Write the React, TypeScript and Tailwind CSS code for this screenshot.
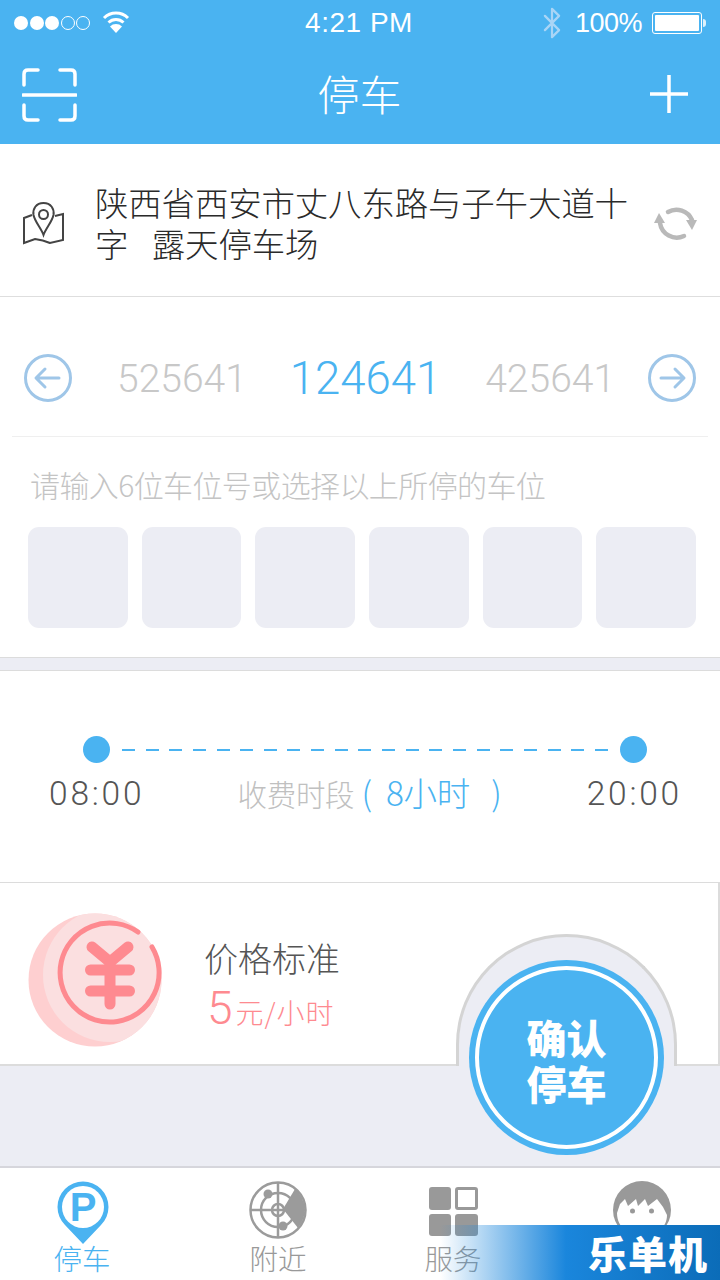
import React from 'react';
import { Bluetooth } from 'lucide-react';

const cjk = { fontFamily: '"Noto Sans CJK SC", sans-serif' };

function StatusBar() {
  return (
    <div className="h-[46px] flex items-center justify-between pl-[14px] pr-[14px] text-white font-['Liberation_Sans']">
      <div className="flex items-center w-[240px]">
        <div className="flex items-center gap-[1.500px]">
          {[0, 1, 2].map(i => <span key={i} className="w-[14px] h-[14px] rounded-full bg-white" />)}
          {[0, 1].map(i => <span key={i} className="w-[14px] h-[14px] rounded-full border border-white" />)}
        </div>
        <svg width="28" height="24" viewBox="0 0 28 24" className="ml-[12px] -mt-[3px]" fill="none" stroke="white" strokeWidth="3">
          <path d="M2 8 A17 17 0 0 1 26 8" />
          <path d="M6.5 12.5 A11 11 0 0 1 21.500 12.500" />
          <path d="M14 23 L8 16.500 A8.500 8.500 0 0 1 20 16.500 Z" fill="white" stroke="none" />
        </svg>
      </div>
      <div className="text-[28px] leading-none tracking-[0.5px] -ml-[2px]">4:21 PM</div>
      <div className="flex items-center justify-end w-[240px]">
        <Bluetooth size={34} strokeWidth={1.6} className="text-[#a9d5f6] mr-[6px]" />
        <span className="text-[27px] leading-none tracking-[-0.5px] mr-[10px]">100%</span>
        <div className="w-[50px] h-[22px] rounded-[3px] border border-white p-[2px]">
          <div className="w-full h-full bg-white rounded-[1px]" />
        </div>
        <div className="w-[3px] h-[8px] bg-white/80 rounded-r-sm ml-[1px]" />
      </div>
    </div>
  );
}

function NavBar() {
  return (
    <div className="h-[98px] flex items-center justify-between pl-[22px] pr-[32px]">
      <svg width="55" height="54" viewBox="0 0 55 54" fill="none" stroke="white" strokeWidth="3.500" strokeLinecap="round" strokeLinejoin="round">
        <path d="M2 17 V6 Q2 2 6 2 H16" />
        <path d="M38 2 H49 Q53 2 53 6 V17" />
        <path d="M2 37 V48 Q2 52 6 52 H16" />
        <path d="M38 52 H49 Q53 52 53 48 V37" />
        <path d="M1 27 H54" />
      </svg>
      <div className="text-[42px] leading-none text-white font-light -ml-[8px] -mt-[5px]" style={cjk}>停车</div>
      <svg width="38" height="38" viewBox="0 0 38 38" stroke="white" strokeWidth="3.500" className="-mt-[2px]">
        <path d="M0 19 H38 M19 0 V38" />
      </svg>
    </div>
  );
}

function AddressRow() {
  return (
    <div className="h-[153px] bg-white border-b border-[#dedede] flex items-center pl-[23px] pr-[22px] pt-[4px]">
      <svg width="41" height="46" viewBox="0 0 41 46" fill="none" stroke="#444" strokeWidth="2" className="shrink-0 mt-[2px]">
        <path d="M20.5 3 C13 3 9.500 9 10.500 15 C12 22 18 28 20.500 35 C23 28 29 22 30.500 15 C31.500 9 28 3 20.500 3 Z" />
        <circle cx="20.500" cy="14.500" r="4.500" />
        <path d="M9 15 L1 18 V43 L12 39 Q20 40 27 43 L40 40 V14 L32 16" />
      </svg>
      <div className="ml-[31px] w-[536px] text-[33.500px] leading-[41px] text-[#2a2a2a] tracking-[-0.200px] font-light" style={cjk}>
        陕西省西安市丈八东路与子午大道十字&nbsp;&nbsp;&nbsp;&#8202;露天停车场
      </div>
      <svg width="46" height="46" viewBox="0 0 46 46" fill="none" stroke="#b9b9b9" strokeWidth="4.500" strokeLinecap="round" className="ml-auto -mr-[1px] shrink-0">
        <path d="M15 13 A17 17 0 0 1 39 21" />
        <path d="M31 37 A17 17 0 0 1 7 24" />
        <path d="M33 21 L44 21 L39 31 Z" fill="#b9b9b9" stroke="none" />
        <path d="M1 24 L12 24 L6 14 Z" fill="#b9b9b9" stroke="none" />
      </svg>
    </div>
  );
}

function ArrowCircle({ dir }: { dir: 'left' | 'right' }) {
  return (
    <svg width="48" height="48" viewBox="0 0 48 48" fill="none" stroke="#9fc6e8" strokeWidth="3" strokeLinecap="round" strokeLinejoin="round" className="shrink-0">
      <circle cx="24" cy="24" r="22.500" />
      {dir === 'left'
        ? <path d="M35 24 H13 M21 15 L12 24 L21 33" />
        : <path d="M13 24 H35 M27 15 L36 24 L27 33" />}
    </svg>
  );
}

function SpotPicker() {
  return (
    <div className="h-[361px] bg-white border-b border-[#dcdcdc] flex flex-col">
      <div className="mx-[12px] h-[140px] border-b border-[#efefef] flex items-center px-[12px] pt-[22px] font-['Roboto']">
        <ArrowCircle dir="left" />
        <span className="ml-[45px] mt-[3px] text-[39px] leading-none text-[#c8c8c8] font-light">525641</span>
        <span className="ml-[43px] mt-[3px] text-[45.500px] leading-none text-[#4ab3f1] font-light">124641</span>
        <span className="ml-[44px] mt-[3px] text-[39px] leading-none text-[#c8c8c8] font-light">425641</span>
        <div className="ml-auto">
          <ArrowCircle dir="right" />
        </div>
      </div>
      <div className="pl-[30px] pt-[27px] text-[30px] leading-[40px] text-[#c4c4c4] tracking-[-0.600px] font-light" style={cjk}>
        请输入6位车位号或选择以上所停的车位
      </div>
      <div className="mt-[23px] mx-[28px] mr-[24px] grid grid-cols-6 gap-[14px]">
        {[0, 1, 2, 3, 4, 5].map(i => (
          <div key={i} className="h-[101px] rounded-[11px] bg-[#ecedf4]" />
        ))}
      </div>
    </div>
  );
}

function TimeRange() {
  return (
    <div className="h-[213px] bg-white border-t border-b border-[#dcdcdc] pt-[65px]">
      <div className="flex items-center pl-[83px] pr-[73px]">
        <span className="w-[27px] h-[27px] rounded-full bg-[#4ab3f1] shrink-0" />
        <div className="flex-1 flex justify-between px-[12px]">
          {Array.from({ length: 21 }).map((_, i) => (
            <span key={i} className="w-[13px] h-[2px] bg-[#4ab3f1]" />
          ))}
        </div>
        <span className="w-[27px] h-[27px] rounded-full bg-[#4ab3f1] shrink-0" />
      </div>
      <div className="mt-[9px] flex items-center justify-between pl-[49px] pr-[38px]">
        <span className="text-[33.500px] leading-[44px] text-[#555] font-['Roboto'] font-light tracking-[2.800px]">08:00</span>
        <span className="text-[29.500px] leading-[44px] text-[#c0c0c0] tracking-[-0.300px] font-light whitespace-pre -mt-[3px] ml-[8px]" style={cjk}>
          收费时段
          <span className="text-[#4ab3f1] text-[33.500px]"> (  8小时   )</span>
        </span>
        <span className="text-[33.500px] leading-[44px] text-[#555] font-['Roboto'] font-light tracking-[2.800px]">20:00</span>
      </div>
    </div>
  );
}

function CoinIcon() {
  return (
    <svg width="135" height="134" viewBox="0 0 135 134" fill="none">
      <clipPath id="coinClip">
        <circle cx="67" cy="67" r="66.500" />
      </clipPath>
      <circle cx="67" cy="67" r="66.500" fill="#fecfd0" />
      <circle cx="82" cy="62" r="67" fill="#fbdfe0" clipPath="url(#coinClip)" />
      <path d="M110 19 A49.500 49.500 0 1 0 124 34" stroke="#fe8a90" strokeWidth="5" strokeLinecap="round" />
      <path d="M64 34 L82 49 L100 34" stroke="#fe8a90" strokeWidth="11" strokeLinecap="round" strokeLinejoin="round" />
      <path d="M62.500 57 H101.500 M62.500 78 H101.500 M82 49 V91" stroke="#fe8a90" strokeWidth="11" strokeLinecap="round" />
    </svg>
  );
}

function PriceRow() {
  return (
    <div className="h-[183px] bg-white border-b-2 border-r-2 border-[#dcdcdc] flex items-start pl-[28px] pt-[30px]">
      <CoinIcon />
      <div className="ml-[42px] pt-[23px]" style={cjk}>
        <div className="text-[34px] leading-[44px] text-[#555] font-light -ml-[1px]">价格标准</div>
        <div className="text-[#fe8a90] leading-[50px] mt-[3px] flex items-baseline font-light">
          <span className="text-[46px] font-['Roboto'] font-light ml-[2px]">5</span>
          <span className="text-[28px] tracking-[1px] ml-[3px]">元/小时</span>
        </div>
      </div>
    </div>
  );
}

function ConfirmButton() {
  return (
    <>
      <div className="absolute left-[456px] top-[934px] w-[221px] h-[132px] rounded-t-[111px] border-[3px] border-b-0 border-[#d4d4d4] bg-[#ecedf4]" />
      <div className="absolute left-[469px] top-[960px] w-[195px] h-[195px] rounded-full bg-[#4ab3f1] flex items-center justify-center">
        <div className="w-[183px] h-[183px] rounded-full border-[4px] border-white flex items-center justify-center">
          <div className="text-[40px] leading-[46px] text-white font-black text-center mt-[5px]" style={cjk}>
            确认<br />停车
          </div>
        </div>
      </div>
    </>
  );
}

function Tab({ label, active, className, children }: { label?: string; active?: boolean; className: string; children: React.ReactNode }) {
  return (
    <div className={`w-[60px] flex flex-col items-center pt-[13px] ${className}`}>
      <div className="h-[63px] flex items-start justify-center">{children}</div>
      {label && (
        <div className={`text-[28.500px] leading-[28px] font-light ${active ? 'text-[#4ab3f1]' : 'text-[#999]'}`} style={cjk}>
          {label}
        </div>
      )}
    </div>
  );
}

function TabBar() {
  return (
    <div className="flex-1 bg-white border-t-2 border-[#d6d6dc] flex">
      <Tab label="停车" active className="ml-[52px]">
        <svg width="52" height="63" viewBox="0 0 52 63" fill="none" className="ml-[1px]">
          <path d="M26 63 L8 44 A25.500 25.500 0 1 1 44 44 Z" fill="#4ab3f1" />
          <circle cx="26" cy="26" r="21" fill="white" />
          <text x="26" y="40" textAnchor="middle" fontSize="40" fontWeight="700" fill="#4ab3f1" fontFamily="Liberation Sans">P</text>
        </svg>
      </Tab>
      <Tab label="附近" className="ml-[136px]">
        <svg width="58" height="58" viewBox="0 0 58 58" fill="none" stroke="#9b9b9b" strokeWidth="2.500">
          <circle cx="29" cy="29" r="27.500" />
          <circle cx="29" cy="29" r="17" />
          <circle cx="29" cy="29" r="6" />
          <path d="M29 1 V57 M1 29 H57" />
          <path d="M34 28 L46 8 A27.500 27.500 0 0 1 49 47 Z" fill="#9b9b9b" stroke="none" />
          <circle cx="19" cy="13" r="4.500" fill="#9b9b9b" stroke="none" />
          <circle cx="34" cy="45" r="4.500" fill="#9b9b9b" stroke="none" />
        </svg>
      </Tab>
      <Tab label="服务" className="ml-[115px]">
        <div className="grid grid-cols-2 gap-[4px] w-[49px] mt-[6px]">
          <span className="h-[22.500px] rounded-[3px] bg-[#999]" />
          <span className="h-[22.500px] rounded-[3px] border-[3px] border-[#999]" />
          <span className="h-[22.500px] rounded-[3px] bg-[#999]" />
          <span className="h-[22.500px] rounded-[3px] bg-[#999]" />
        </div>
      </Tab>
      {/* label of this tab sits under the watermark in the picture */}
      <Tab className="ml-[129px]">
        <svg width="58" height="58" viewBox="0 0 58 58">
          <circle cx="29" cy="29" r="29" fill="#999" />
          <path d="M4 32 L7 23 L12 18 L15 25 L23 18 L25 25 L32 18 L35 25 L44 18 L50 26 L54 34 C54 62 4 62 4 32 Z" fill="white" />
          <circle cx="19.500" cy="30" r="2.500" fill="#999" />
          <circle cx="38.500" cy="30" r="2.500" fill="#999" />
        </svg>
      </Tab>
    </div>
  );
}

function Watermark() {
  return (
    <div className="absolute right-0 bottom-0 w-[280px] h-[55px] bg-gradient-to-r from-[#1a86dc]/0 via-[#1a86dc] via-45% to-[#0b6cb8] flex items-center justify-end pr-[12px]">
      <span className="text-[39px] leading-none font-black text-white tracking-[1px]" style={cjk}>乐单机</span>
    </div>
  );
}

export default function App() {
  return (
    <div className="relative w-[720px] h-[1280px] overflow-hidden flex flex-col bg-[#ecedf4]">
      <div className="h-[144px] bg-[#4ab3f1]">
        <StatusBar />
        <NavBar />
      </div>
      <AddressRow />
      <SpotPicker />
      <div className="h-[12px]" />
      <TimeRange />
      <PriceRow />
      <div className="h-[100px]" />
      <TabBar />
      <ConfirmButton />
      <Watermark />
    </div>
  );
}
